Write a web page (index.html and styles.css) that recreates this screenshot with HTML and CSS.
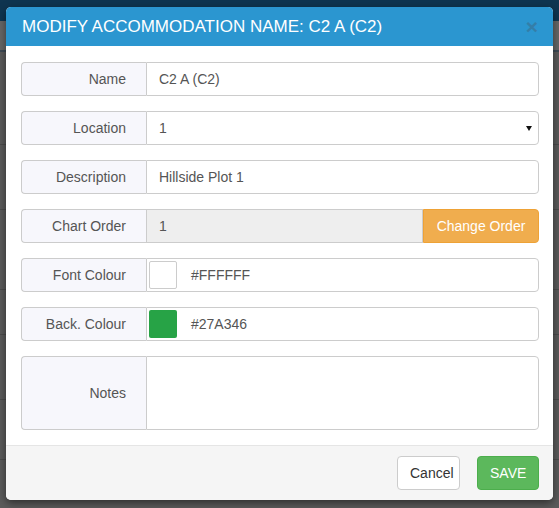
FILE: index.html
```html
<!DOCTYPE html>
<html lang="en">
<head>
    <meta charset="UTF-8">
    <meta name="viewport" content="width=device-width, initial-scale=1.0">
    <title>Modify Accommodation</title>
    <link rel="stylesheet" href="styles.css">
</head>
<body>
    <div class="page">
        <div class="topbar"></div>
        <div class="subbar"></div>
        <div class="rows">
            <div class="row r1"></div>
            <div class="row r2"></div>
            <div class="row r3"></div>
            <div class="row r4"></div>
            <div class="row r5"></div>
            <div class="row r6"></div>
        </div>
    </div>

    <div class="modal">
        <div class="modal-header">
            <h4 class="modal-title">MODIFY ACCOMMODATION NAME: C2 A (C2)</h4>
            <span class="close">&times;</span>
        </div>
        <div class="modal-body">
            <div class="input-group">
                <span class="addon">Name</span>
                <input type="text" class="field" value="C2 A (C2)">
            </div>
            <div class="input-group">
                <span class="addon">Location</span>
                <div class="select-wrap">
                    <select class="field">
                        <option>1</option>
                    </select>
                    <span class="caret"></span>
                </div>
            </div>
            <div class="input-group">
                <span class="addon">Description</span>
                <input type="text" class="field" value="Hillside Plot 1">
            </div>
            <div class="input-group">
                <span class="addon">Chart Order</span>
                <input type="text" class="field disabled" value="1" disabled>
                <button class="btn btn-warning">Change Order</button>
            </div>
            <div class="input-group">
                <span class="addon">Font Colour</span>
                <div class="field colour">
                    <span class="swatch white"></span>
                    <span>#FFFFFF</span>
                </div>
            </div>
            <div class="input-group">
                <span class="addon">Back. Colour</span>
                <div class="field colour">
                    <span class="swatch green"></span>
                    <span>#27A346</span>
                </div>
            </div>
            <div class="input-group notes">
                <span class="addon">Notes</span>
                <textarea class="field"></textarea>
            </div>
        </div>
        <div class="modal-footer">
            <button class="btn btn-default">Cancel</button>
            <button class="btn btn-success">SAVE</button>
        </div>
    </div>
</body>
</html>
```

FILE: styles.css
```css
*{
    margin: 0;
    padding: 0;
    box-sizing: border-box;
}

body{
    font-family: "Liberation Sans", Arial, sans-serif;
    font-size: 14px;
    color: #555;
    background: #5b5b5b;
    width: 559px;
    height: 508px;
    overflow: hidden;
    position: relative;
}

/* page behind the backdrop */
.page{
    height: 100%;
}

.topbar{
    height: 21px;
    background: #0f3550;
}

.subbar{
    height: 31px;
    background: #676767;
    border-bottom: 2px solid #3e4a55;
}

.rows .row{
    border-bottom: 1px solid #4c4c4c;
}

.r1{ height: 93px; }
.r2{ height: 65px; }
.r3{ height: 80px; }
.r4{ height: 45px; }
.r5{ height: 65px; }
.r6{ height: 60px; }

/* modal */
.modal{
    position: absolute;
    left: 6px;
    top: 7px;
    width: 547px;
    background: #fff;
    border-radius: 5px;
    box-shadow: 0 3px 9px rgba(0, 0, 0, .5);
    overflow: hidden;
}

.modal-header{
    display: flex;
    justify-content: space-between;
    align-items: center;
    height: 39px;
    padding: 0 15px 0 16px;
    background: #2b96d0;
    color: #fff;
}

.modal-title{
    font-size: 17px;
    font-weight: normal;
}

.close{
    color: #3b6f8f;
    font-size: 21px;
    font-weight: bold;
    opacity: .6;
    line-height: 1;
}

.modal-body{
    padding: 16px 14px 15px 15px;
    display: flex;
    flex-direction: column;
    gap: 15px;
}

.input-group{
    display: flex;
    height: 34px;
}

.addon{
    flex: 0 0 125px;
    display: flex;
    align-items: center;
    justify-content: flex-end;
    padding-right: 20px;
    background: #f7f7fc;
    border: 1px solid #ccc;
    border-right: none;
    border-radius: 4px 0 0 4px;
    color: #555;
}

.field{
    flex: 1;
    min-width: 0;
    height: 100%;
    padding: 6px 12px;
    border: 1px solid #ccc;
    border-radius: 0 4px 4px 0;
    font-family: inherit;
    font-size: 14px;
    color: #555;
    background: #fff;
    outline: none;
}

.field.disabled{
    background: #eee;
    border-radius: 0;
}

.select-wrap{
    flex: 1;
    position: relative;
}

.select-wrap select{
    width: 100%;
    appearance: none;
    -webkit-appearance: none;
}

.caret{
    position: absolute;
    right: 7px;
    top: 15px;
    border-left: 3.5px solid transparent;
    border-right: 3.5px solid transparent;
    border-top: 5px solid #111;
}

.btn{
    height: 34px;
    padding: 6px 12px;
    border: 1px solid transparent;
    border-radius: 4px;
    font-family: inherit;
    font-size: 14px;
}

.btn-warning{
    flex: 0 0 116px;
    background: #f0ad4e;
    border-color: #eea236;
    color: #fff;
    border-radius: 0 4px 4px 0;
}

.colour{
    display: flex;
    align-items: center;
    gap: 14px;
    padding: 2px 12px 2px 2px;
}

.swatch{
    width: 28px;
    height: 28px;
    border-radius: 2px;
}

.swatch.white{
    background: #fff;
    border: 1px solid #ccc;
}

.swatch.green{
    background: #27a346;
}

.notes{
    height: 74px;
}

.notes textarea{
    resize: none;
}

.modal-footer{
    display: flex;
    justify-content: flex-end;
    gap: 17px;
    padding: 10px 14px 10px 15px;
    height: 55px;
    background: #f5f5f5;
    border-top: 1px solid #e5e5e5;
}

.btn-default{
    width: 63px;
    background: #fff;
    border-color: #ccc;
    color: #333;
}

.btn-success{
    width: 62px;
    background: #5cb85c;
    border-color: #4cae4c;
    color: #fff;
}
```
